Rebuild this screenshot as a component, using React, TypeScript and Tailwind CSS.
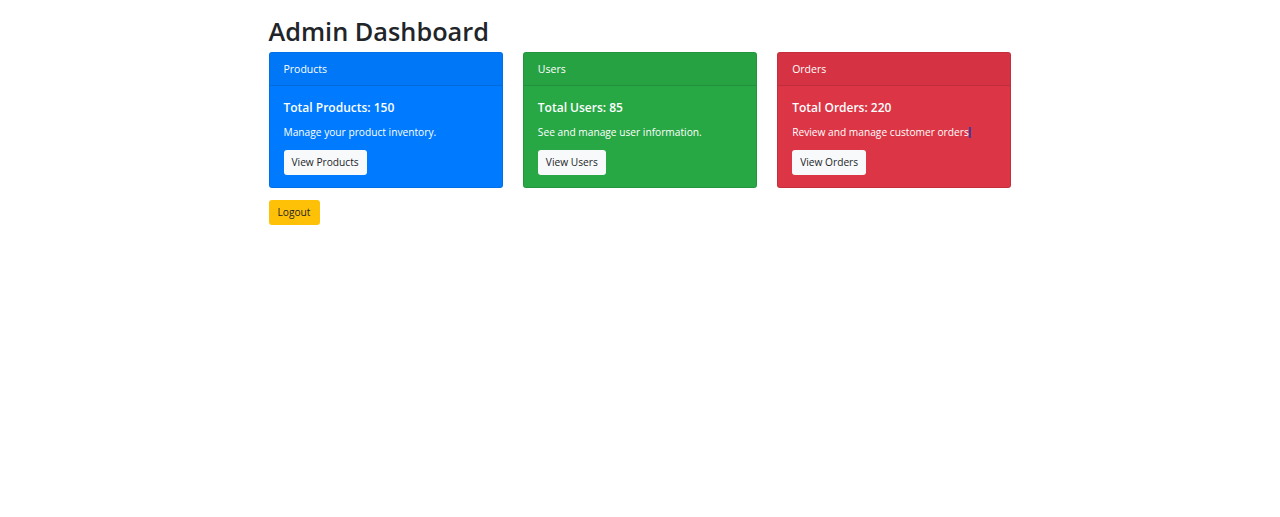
import React from 'react';

type Card = {
  title: string;
  heading: string;
  text: string;
  action: string;
  bg: string;
  head: string;
  caret?: boolean;
};

const cards: Card[] = [
  {
    title: 'Products',
    heading: 'Total Products: 150',
    text: 'Manage your product inventory.',
    action: 'View Products',
    bg: 'bg-[#007bff]',
    head: 'bg-[#0077f7]',
  },
  {
    title: 'Users',
    heading: 'Total Users: 85',
    text: 'See and manage user information.',
    action: 'View Users',
    bg: 'bg-[#28a745]',
    head: 'bg-[#27a243]',
  },
  {
    title: 'Orders',
    heading: 'Total Orders: 220',
    text: 'Review and manage customer orders',
    action: 'View Orders',
    bg: 'bg-[#dc3545]',
    head: 'bg-[#d53343]',
    caret: true,
  },
];

const StatCard = ({ card }: { card: Card }) => (
  <div className={`flex-1 h-[136px] rounded-[3px] border border-black/10 text-white overflow-hidden ${card.bg}`}>
    <div className={`h-[33px] px-[14px] pt-[1px] flex items-center border-b border-black/10 text-[10.5px] ${card.head}`}>
      {card.title}
    </div>
    <div className="px-[14px] pt-[13px]">
      <h5 className="text-[12px] leading-[17px] font-semibold">{card.heading}</h5>
      <p className="mt-[8px] text-[10.2px] leading-[17px]">
        {card.text}
        {card.caret && (
          <span className="relative">
            .
            <span className="absolute right-0 top-[2px] w-[2px] h-[11px] bg-[#3d3aa3]" />
          </span>
        )}
      </p>
      <button className="mt-[9px] h-[25px] px-[8px] rounded-[3px] bg-[#f8f9fa] text-[#212529] text-[10.2px]">
        {card.action}
      </button>
    </div>
  </div>
);

export default function App() {
  return (
    <div className="min-h-screen bg-white text-[#212529]" style={{ fontFamily: '"Open Sans", "Noto Sans", sans-serif' }}>
      <div className="w-[743px] mx-auto pt-[14px]">
        <h1 className="text-[25.3px] leading-[34px] font-semibold">Admin Dashboard</h1>
        <div className="mt-[4px] flex gap-[20px]">
          {cards.map((c) => (
            <StatCard key={c.title} card={c} />
          ))}
        </div>
        <button className="mt-[12px] h-[25px] w-[51px] rounded-[3px] bg-[#ffc107] text-[#212529] text-[10.2px]">
          Logout
        </button>
      </div>
    </div>
  );
}
